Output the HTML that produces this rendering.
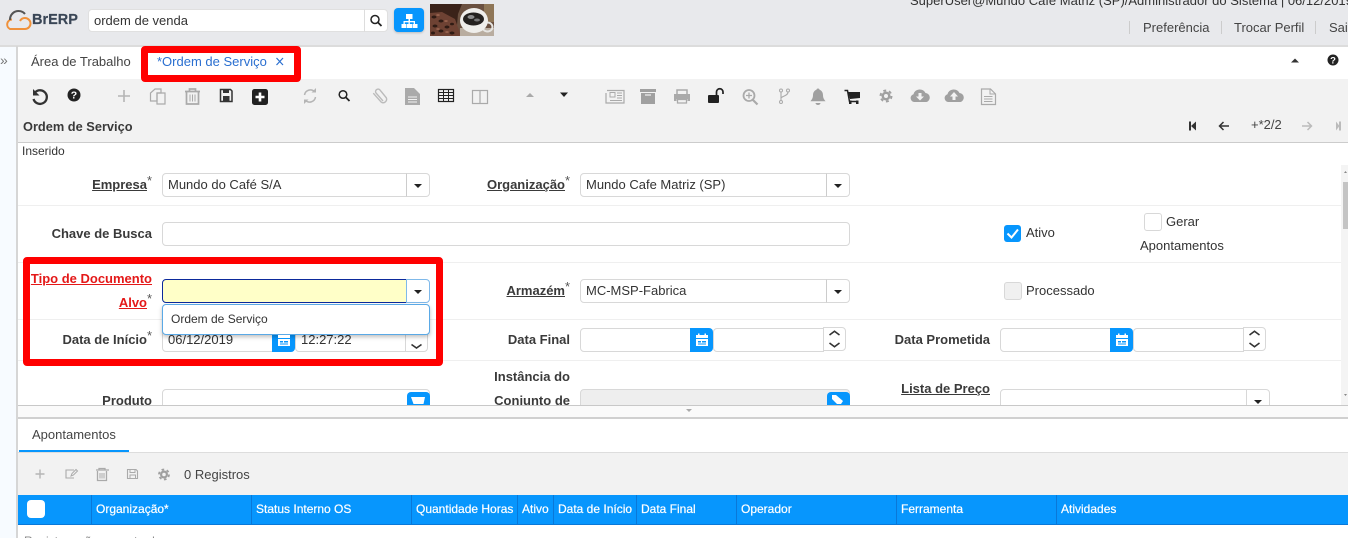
<!DOCTYPE html>
<html lang="pt"><head><meta charset="utf-8"><title>BrERP</title>
<style>
html,body{margin:0;padding:0;width:1348px;height:538px;overflow:hidden;background:#fff}
body{position:relative;font-family:"Liberation Sans",sans-serif;font-size:13px;color:#333}
.a,.t,.l,.i,.b,.h{position:absolute;box-sizing:border-box}
.t,.l,.h{white-space:nowrap;line-height:16px}
.l{font-weight:bold;text-align:right;color:#3a3a3a;font-size:13px}
.l u{text-underline-offset:1px}
.l sup{font-weight:normal;font-size:13px;position:absolute;top:-4px;color:#555;line-height:16px}
.i{background:#fff;border:1px solid #d8d8d8;border-radius:4px;font-size:13px;line-height:22px;padding-left:5px;color:#333;height:24px}
.b{background:#fff;border:1px solid #d8d8d8;border-left-color:#ccc;border-radius:0 4px 4px 0;height:24px;width:24px}
.b:after{content:"";position:absolute;left:7px;top:10px;border:4px solid transparent;border-top:4px solid #222;border-bottom:0}
.c{position:absolute;box-sizing:border-box;background:#0796fd;width:23px;height:24px;border-radius:0 4px 4px 0}
.s{position:absolute;box-sizing:border-box;background:#fff;border:1px solid #d8d8d8;border-radius:0 4px 4px 0;width:23px;height:24px}
.r{position:absolute;left:18px;width:1323px;height:1px;background:#efefef}
.h{color:#fff;font-size:12px;top:501px;font-weight:normal;-webkit-text-stroke:.2px #fff}
.v{position:absolute;top:495px;width:1px;height:29px;background:#0a78d8}
.red{position:absolute;box-sizing:border-box;border:7px solid #f00;border-radius:4px}
</style></head><body>

<!-- header -->
<div class="a" style="left:0;top:0;width:1348px;height:46px;background:#e8e9ec"></div>
<div class="a" style="left:0;top:45px;width:1348px;height:2px;background:#dcdcdc"></div>
<div class="a" style="left:0;top:47px;width:17px;height:491px;background:#f7fbff"></div>
<div class="a" style="left:16px;top:46px;width:2px;height:492px;background:#d6d6d6"></div>
<div class="t" style="left:0;top:52px;font-size:14px;color:#777">»</div>

<div class="t" style="left:32px;top:12px;font-size:14.5px;font-weight:bold;color:#3a4656;-webkit-text-stroke:.2px #3a4656">BrERP</div>
<div class="a" style="left:88px;top:9px;width:300px;height:23px;background:#fff;border:1px solid #e0e0e0;border-radius:4px"></div>
<div class="t" style="left:94px;top:13px;font-size:13px;color:#333">ordem de venda</div>
<div class="a" style="left:364px;top:9px;width:1px;height:23px;background:#ddd"></div>
<div class="a" style="left:394px;top:8px;width:30px;height:24px;background:#0796fd;border-radius:4px;box-shadow:0 1px 2px rgba(0,0,0,.2)"></div>

<div class="t" style="left:910px;top:-7px;font-size:13px;color:#333">SuperUser@Mundo Cafe Matriz (SP)/Administrador do Sistema | 06/12/2019</div>
<div class="a" style="left:1129px;top:21px;width:1px;height:13px;background:#ccc"></div>
<div class="t" style="left:1143px;top:20px;font-size:13px;color:#444">Preferência</div>
<div class="a" style="left:1221px;top:21px;width:1px;height:13px;background:#ccc"></div>
<div class="t" style="left:1234px;top:20px;font-size:13px;color:#444">Trocar Perfil</div>
<div class="a" style="left:1315px;top:21px;width:1px;height:13px;background:#ccc"></div>
<div class="t" style="left:1329px;top:20px;font-size:13px;color:#444">Sair</div>

<!-- tab bar -->
<div class="t" style="left:31px;top:54px;font-size:13px;color:#444">Área de Trabalho</div>
<div class="t" style="left:157px;top:54px;font-size:13px;color:#2a6fd0">*Ordem de Serviço</div>

<!-- toolbar -->
<div class="a" style="left:18px;top:79px;width:1330px;height:64px;background:#f2f2f2;border-bottom:1px solid #ccc"></div>
<div class="t" style="left:23px;top:119px;font-size:12.800px;font-weight:bold;color:#3a3a3a">Ordem de Serviço</div>
<div class="t" style="left:1251px;top:117px;font-size:13px;color:#444">+*2/2</div>

<!-- form -->
<div class="t" style="left:22px;top:143px;font-size:12px;color:#333">Inserido</div>
<div class="r" style="top:205px"></div>
<div class="r" style="top:262px"></div>
<div class="r" style="top:319px"></div>
<div class="r" style="top:360px"></div>

<div class="l" style="right:1201px;top:177px"><u>Empresa</u><sup>*</sup></div>
<div class="i" style="left:162px;top:173px;width:245px;border-radius:4px 0 0 4px">Mundo do Café S/A</div><div class="b" style="left:406px;top:173px"></div>
<div class="l" style="right:783px;top:177px"><u>Organização</u><sup>*</sup></div>
<div class="i" style="left:580px;top:173px;width:247px;border-radius:4px 0 0 4px">Mundo Cafe Matriz (SP)</div><div class="b" style="left:826px;top:173px"></div>

<div class="l" style="right:1196px;top:226px">Chave de Busca</div>
<div class="i" style="left:162px;top:222px;width:688px"></div>

<div class="a" style="left:1004px;top:225px;width:17px;height:17px;background:#0796fd;border-radius:3px"></div>
<div class="t" style="left:1026px;top:225px;font-size:13px">Ativo</div>
<div class="a" style="left:1144px;top:213px;width:18px;height:18px;background:#fff;border:1px solid #d8d8d8;border-radius:3px"></div>
<div class="t" style="left:1166px;top:214px;font-size:13px">Gerar</div>
<div class="t" style="left:1140px;top:238px;font-size:13px">Apontamentos</div>

<div class="l" style="right:1196px;top:271px;color:#e41818"><u>Tipo de Documento</u></div>
<div class="l" style="right:1201px;top:295px;color:#e41818"><u>Alvo</u><sup style="color:#555">*</sup></div>
<div class="a" style="left:162px;top:279px;width:245px;height:24px;background:#ffffc8;border:1px solid #0c2a9c;border-radius:4px 0 0 4px"></div>
<div class="b" style="left:406px;top:279px;border-color:#7fb9ea"></div>

<div class="l" style="right:783px;top:283px"><u>Armazém</u><sup>*</sup></div>
<div class="i" style="left:580px;top:279px;width:247px;border-radius:4px 0 0 4px">MC-MSP-Fabrica</div><div class="b" style="left:826px;top:279px"></div>
<div class="a" style="left:1004px;top:282px;width:18px;height:18px;background:#f0f0f0;border:1px solid #d8d8d8;border-radius:3px"></div>
<div class="t" style="left:1026px;top:283px;font-size:13px">Processado</div>

<div class="l" style="right:1201px;top:332px">Data de Início<sup>*</sup></div>
<div class="i" style="left:162px;top:328px;width:111px;border-radius:4px 0 0 4px">06/12/2019</div><div class="c" style="left:272px;top:328px"></div>
<div class="i" style="left:295px;top:328px;width:111px;border-radius:4px 0 0 4px">12:27:22</div><div class="s" style="left:405px;top:328px"></div>

<div class="l" style="right:778px;top:332px">Data Final</div>
<div class="i" style="left:580px;top:328px;width:111px;border-radius:4px 0 0 4px"></div><div class="c" style="left:690px;top:328px"></div>
<div class="i" style="left:713px;top:328px;width:111px;border-radius:4px 0 0 4px"></div><div class="s" style="left:823px;top:327px"></div>

<div class="l" style="right:358px;top:332px">Data Prometida</div>
<div class="i" style="left:1000px;top:328px;width:111px;border-radius:4px 0 0 4px"></div><div class="c" style="left:1110px;top:328px"></div>
<div class="i" style="left:1133px;top:328px;width:111px;border-radius:4px 0 0 4px"></div><div class="s" style="left:1243px;top:327px"></div>

<div class="l" style="right:1196px;top:393px">Produto</div>
<div class="i" style="left:162px;top:389px;width:268px"></div><div class="c" style="left:407px;top:392px;border-radius:4px 4px 0 0"></div>
<div class="l" style="right:778px;top:369px">Instância do</div>
<div class="l" style="right:778px;top:393px">Conjunto de</div>
<div class="i" style="left:580px;top:389px;width:270px;background:#eee"></div><div class="c" style="left:827px;top:392px;border-radius:4px 4px 0 0"></div>
<div class="l" style="right:358px;top:381px"><u>Lista de Preço</u></div>
<div class="i" style="left:1000px;top:389px;width:270px"></div>
<div class="a" style="left:1246px;top:389px;width:1px;height:20px;background:#d8d8d8"></div>
<div class="a" style="left:1254px;top:400px;border:4px solid transparent;border-top:4px solid #222;border-bottom:0"></div>

<!-- scrollbar -->
<div class="a" style="left:1341px;top:165px;width:7px;height:240px;background:#f4f4f4"></div>
<div class="a" style="left:1343px;top:182px;width:5px;height:47px;background:#c4c4c4"></div>

<!-- splitter -->
<div class="a" style="left:18px;top:405px;width:1330px;height:14px;background:#fafafa;border-top:1px solid #c8c8c8;border-bottom:2px solid #d0d0d0"></div>
<div class="a" style="left:686px;top:409px;border:3px solid transparent;border-top:3px solid #aaa;border-bottom:0"></div>

<!-- popup -->
<div class="a" style="left:162px;top:304px;width:268px;height:31px;background:#fff;border:1px solid #5aa9e6;border-radius:4px;box-shadow:0 2px 4px rgba(0,0,0,.25)"></div>
<div class="t" style="left:171px;top:311px;font-size:12px;color:#333">Ordem de Serviço</div>

<!-- detail -->
<div class="t" style="left:32px;top:427px;font-size:13px;color:#444">Apontamentos</div>
<div class="a" style="left:18px;top:452px;width:1330px;height:1px;background:#ddd"></div>
<div class="a" style="left:19px;top:450px;width:110px;height:2px;background:#0796fd"></div>
<div class="a" style="left:18px;top:453px;width:1330px;height:42px;background:#f2f2f2"></div>
<div class="t" style="left:184px;top:467px;font-size:13px;color:#444">0 Registros</div>
<div class="a" style="left:18px;top:495px;width:1330px;height:30px;background:#0796fd;border-bottom:1px solid #0a78d8"></div>
<div class="a" style="left:27px;top:500px;width:18px;height:18px;background:#fff;border-radius:4px"></div>
<div class="v" style="left:91px"></div><div class="v" style="left:251px"></div><div class="v" style="left:411px"></div><div class="v" style="left:517px"></div><div class="v" style="left:553px"></div><div class="v" style="left:636px"></div><div class="v" style="left:736px"></div><div class="v" style="left:896px"></div><div class="v" style="left:1056px"></div>
<div class="h" style="left:96px">Organização*</div>
<div class="h" style="left:256px">Status Interno OS</div>
<div class="h" style="left:416px">Quantidade Horas</div>
<div class="h" style="left:522px">Ativo</div>
<div class="h" style="left:558px">Data de Início</div>
<div class="h" style="left:641px">Data Final</div>
<div class="h" style="left:741px">Operador</div>
<div class="h" style="left:901px">Ferramenta</div>
<div class="h" style="left:1061px">Atividades</div>
<div class="t" style="left:24px;top:533px;font-size:12px;color:#888">Registros não encontrados</div>

<!-- icons overlay -->
<svg class="a" style="left:0;top:0" width="1348" height="538" viewBox="0 0 1348 538" fill="none">
<!-- logo -->
<path d="M12 19.500A5 5 0 0 0 10 29H25A5.500 5.500 0 0 0 25 18 5.500 5.500 0 0 0 20 21" stroke="#f0913a" stroke-width="2"/>
<path d="M10 20A8.500 8.500 0 0 1 25 14" stroke="#555" stroke-width="2"/>
<!-- search -->
<circle cx="375" cy="19.500" r="4" stroke="#222" stroke-width="1.500"/><path d="M378 22.500l3.500 3.500" stroke="#222" stroke-width="1.800"/>
<!-- sitemap -->
<g fill="#fff"><rect x="406" y="14" width="6.500" height="5"/><rect x="408.500" y="19" width="1.500" height="2.500"/><rect x="403.500" y="21" width="11.500" height="1.300"/><rect x="403.500" y="21" width="1.300" height="3"/><rect x="408.500" y="21" width="1.300" height="3"/><rect x="413.700" y="21" width="1.300" height="3"/><rect x="401.500" y="24" width="5" height="4"/><rect x="407" y="24" width="5" height="4"/><rect x="412.500" y="24" width="5" height="4"/></g>
<!-- coffee -->
<rect x="430" y="4" width="64" height="32" fill="#6a5040"/>
<path d="M430 4h32l-4 10-2 22h-26z" fill="#3a2219"/>
<path d="M430 13l12-1 13 7 6 17h-31z" fill="#6e4233"/>
<g fill="#2f1b14"><ellipse cx="434" cy="17" rx="2.500" ry="1.500"/><ellipse cx="441" cy="21" rx="2.500" ry="1.500"/><ellipse cx="435" cy="26" rx="2.500" ry="1.500"/><ellipse cx="447" cy="27" rx="2.500" ry="1.500"/><ellipse cx="441" cy="31" rx="2.500" ry="1.500"/><ellipse cx="452" cy="33" rx="2.500" ry="1.500"/><ellipse cx="433" cy="33" rx="2" ry="1.500"/><ellipse cx="452" cy="24" rx="2" ry="1.300"/></g>
<g fill="#94604c"><ellipse cx="438" cy="15" rx="1.800" ry="1"/><ellipse cx="446" cy="21" rx="1.800" ry="1"/><ellipse cx="438" cy="29" rx="1.800" ry="1"/><ellipse cx="447" cy="32" rx="1.800" ry="1"/></g>
<rect x="484" y="4" width="10" height="18" fill="#8f7657"/>
<path d="M460 36h34v-8h-34z" fill="#b9ada0"/>
<ellipse cx="487.500" cy="27" rx="5" ry="4.500" stroke="#e6e5e2" stroke-width="2"/>
<ellipse cx="474" cy="20.500" rx="14" ry="12.500" fill="#efeeeb"/><ellipse cx="473.500" cy="19" rx="10.500" ry="6.500" fill="#252220"/>
<ellipse cx="471" cy="17" rx="3.500" ry="2" fill="#8c8c8c"/><ellipse cx="477" cy="20" rx="3" ry="1.500" fill="#777"/>
<!-- tab close -->
<path d="M276.500 58l6.500 7M283 58l-6.500 7" stroke="#2a6fd0" stroke-width="1.200"/>
<!-- tabbar -->
<path d="M1291 62.500l4-4 4 4z" fill="#333"/>
<circle cx="1333" cy="60" r="5.500" fill="#222"/>
<!-- undo -->
<path d="M35 92.500a6.800 6.800 0 1 1-1.500 6.500" stroke="#333" stroke-width="2.300"/><path d="M33 89v6.500h6.500z" fill="#333"/>
<circle cx="74" cy="95" r="6.500" fill="#222"/>
<path d="M124 90v12M118 96h12" stroke="#b5b5b5" stroke-width="1.600"/>
<!-- copy -->
<path d="M155 89h6v4h-4v8h-6.500v-8z" stroke="#aaa" stroke-width="1.200"/><path d="M158 93h7v11h-8v-11z" stroke="#aaa" stroke-width="1.200"/>
<!-- trash -->
<path d="M185 91.500h15M189.500 91v-2h6v2M186.500 92v12h12V92" stroke="#aaa" stroke-width="1.700"/><path d="M190 94.500v7M192.500 94.500v7M195 94.500v7" stroke="#aaa"/>
<!-- save -->
<path d="M220.500 89.500h10l1.500 1.500v10.500h-11.500z" stroke="#333" stroke-width="1.500"/><rect x="223" y="89.500" width="6" height="3.500" fill="#333"/><rect x="223" y="96" width="6.500" height="5" fill="#333"/>
<!-- plus square -->
<rect x="252" y="89" width="16" height="16" rx="2.500" fill="#222"/><path d="M260 92.500v9M255.500 97h9" stroke="#fff" stroke-width="2.600"/>
<!-- refresh -->
<path d="M304.500 95a6 6 0 0 1 10-3.500M315.500 97a6 6 0 0 1-10 3.500" stroke="#b5b5b5" stroke-width="1.500"/><path d="M316 88v4.500h-4.500zM304 104v-4.500h4.500z" fill="#b5b5b5"/>
<!-- search -->
<circle cx="343" cy="94.500" r="3.800" stroke="#222" stroke-width="1.500"/><path d="M346 97.500l3.500 3.500" stroke="#222" stroke-width="1.800"/>
<!-- paperclip -->
<path d="M383 103l-7-8a2.500 2.500 0 0 1 3.800-3.200l6.500 8a3.500 3.500 0 0 1-5 4.400l-8-9" stroke="#bbb" stroke-width="1.400" transform="translate(0 -2)"/>
<!-- file -->
<path d="M405 88h9l6 6v11h-15z" fill="#aaa"/><path d="M408 97h9M408 99.500h9M408 102h9" stroke="#f2f2f2"/>
<!-- table -->
<rect x="438.500" y="89.500" width="15" height="12" stroke="#222" stroke-width="1.200"/><path d="M438.500 92.500h15M438.500 95.500h15M438.500 98.500h15M443.500 90v11M448.500 90v11" stroke="#222"/>
<!-- columns -->
<rect x="472.500" y="90.500" width="15" height="13" stroke="#aaa" stroke-width="1.200"/><path d="M480 90v14" stroke="#aaa" stroke-width="1.200"/>
<path d="M526 97l4-4 4 4z" fill="#aaa"/><path d="M560 92.500h8l-4 4.500z" fill="#222"/>
<!-- newspaper -->
<path d="M607 90.500h17v12.500h-18v-10" stroke="#aaa" stroke-width="1.200"/><rect x="610" y="92.500" width="5" height="4.500" stroke="#aaa"/><path d="M617 93h5M617 95.500h5M617 98h5M610 100.500h12" stroke="#aaa"/>
<!-- archive -->
<path d="M640 89h16v3h-16zM641 93h14v11h-14z" fill="#a0a0a0"/><path d="M645 95h6" stroke="#f2f2f2" stroke-width="1.200"/>
<!-- print -->
<path d="M677 94v-4h10v4" stroke="#aaa" stroke-width="1.500"/><path d="M674 94h16v7h-2.500v-2h-11v2H674z" fill="#aaa"/><path d="M677.500 99.500h9v3.500h-9z" stroke="#aaa" stroke-width="1.300"/>
<!-- unlock -->
<rect x="708" y="95" width="11" height="8" rx="1" fill="#222"/><path d="M716.500 95v-3a3.200 3.200 0 0 1 6.500 0v2" stroke="#222" stroke-width="1.700"/>
<!-- zoom -->
<circle cx="749" cy="95.500" r="5.500" stroke="#aaa" stroke-width="1.800"/><path d="M753 100l4.500 4.500" stroke="#aaa" stroke-width="2.200"/><path d="M749 92.500v6M746 95.500h6" stroke="#aaa" stroke-width="1.300"/>
<!-- fork -->
<circle cx="781" cy="90.500" r="1.500" stroke="#aaa"/><circle cx="788" cy="90.500" r="1.500" stroke="#aaa"/><circle cx="781" cy="102" r="1.500" stroke="#aaa"/><path d="M781 92v8.500M788 92c0 4-6 4-7 6" stroke="#aaa" stroke-width="1.100"/>
<!-- bell -->
<path d="M818 88.500c1 0 1.500.5 1.500 1.300 2.500 1 3.500 3 3.500 5.500 0 3 1.500 4.500 2.500 6h-15c1-1.500 2.500-3 2.500-6 0-2.500 1-4.500 3.500-5.500 0-.8.500-1.300 1.500-1.300z" fill="#a0a0a0"/><path d="M815.500 103h5a2.500 2 0 0 1-5 0z" fill="#a0a0a0"/>
<!-- cart -->
<path d="M844.500 90.500h3l2 11h9" stroke="#222" stroke-width="1.500"/><path d="M848 92h12v6l-10 1z" fill="#222"/><rect x="849" y="100.500" width="2.500" height="3.500" fill="#222"/><rect x="856" y="100.500" width="2.500" height="3.500" fill="#222"/>
<!-- gear -->
<circle cx="886" cy="96" r="4.500" fill="#a0a0a0"/><circle cx="886" cy="96" r="5.500" stroke="#a0a0a0" stroke-width="2" stroke-dasharray="2.900 2.860"/><circle cx="886" cy="96" r="2" fill="#f2f2f2"/>
<!-- clouds -->
<path d="M914 102a4 4 0 0 1-.5-7.800 6.500 6.500 0 0 1 12-1.200 4.600 4.600 0 0 1 1 9z" fill="#a0a0a0"/><path d="M916 96.500h8l-4 4z" fill="#f2f2f2"/><rect x="918.500" y="93" width="3" height="4" fill="#f2f2f2"/>
<path d="M948 102a4 4 0 0 1-.5-7.800 6.500 6.500 0 0 1 12-1.200 4.600 4.600 0 0 1 1 9z" fill="#a0a0a0"/><path d="M950 96.500h8l-4-4.500z" fill="#f2f2f2"/><rect x="952.500" y="96" width="3" height="4" fill="#f2f2f2"/>
<!-- doc -->
<path d="M981.500 89h9l5 5v10.500h-14z" stroke="#aaa" stroke-width="1.200"/><path d="M990 89v5h5M984 96.500h8.500M984 99h8.500M984 101.500h8.500" stroke="#aaa"/>
<!-- nav -->
<path d="M1189 121.500h2v9h-2zM1196 121.500v9l-5-4.500z" fill="#333"/>
<path d="M1229 126h-9M1223.500 122l-4 4 4 4" stroke="#333" stroke-width="1.500"/>
<path d="M1302 126h9M1307.500 122l4 4-4 4" stroke="#bbb" stroke-width="1.500"/>
<path d="M1341 121.500h-2v9h2zM1336 121.500v9l3.500-4.500z" fill="#bbb"/>
<!-- calendars -->
<g><path d="M278 335h12v11h-12z" fill="#fff"/><path d="M278 338.500h12" stroke="#0796fd"/><path d="M280 341h3v1.500h-3zM284 341h4v1.500h-4zM280 343.500h8v1h-8z" fill="#0796fd"/></g>
<g transform="translate(418 0)"><path d="M278 335h12v11h-12z" fill="#fff"/><rect x="280" y="333.500" width="1.500" height="2" fill="#fff"/><rect x="286.500" y="333.500" width="1.500" height="2" fill="#fff"/><path d="M278 338.500h12" stroke="#0796fd"/><path d="M280 341h3v1.500h-3zM284 341h4v1.500h-4zM280 343.500h8v1h-8z" fill="#0796fd"/></g>
<g transform="translate(838 0)"><path d="M278 335h12v11h-12z" fill="#fff"/><rect x="280" y="333.500" width="1.500" height="2" fill="#fff"/><rect x="286.500" y="333.500" width="1.500" height="2" fill="#fff"/><path d="M278 338.500h12" stroke="#0796fd"/><path d="M280 341h3v1.500h-3zM284 341h4v1.500h-4zM280 343.500h8v1h-8z" fill="#0796fd"/></g>
<!-- spinners -->
<path d="M411.500 344.500l5 3.500 5-3.500" stroke="#333" stroke-width="1.600"/>
<path d="M829.500 335l5-3.800 5 3.800M829.500 343l5 3.800 5-3.800" stroke="#333" stroke-width="1.600"/>
<path d="M1249.500 335l5-3.800 5 3.800M1249.500 343l5 3.800 5-3.800" stroke="#333" stroke-width="1.600"/>
<!-- check -->
<path d="M1007.500 233.500l4 4 6.500-8" stroke="#fff" stroke-width="2"/>
<!-- cart/tag clipped -->
<path d="M411 397h14l-1.500 7h-10z" fill="#fff"/>
<path d="M832 395h4l7 6-2 3h-4l-5-5z" fill="#fff"/>
<!-- lower toolbar -->
<path d="M40 469.500v9M35.500 474h9" stroke="#b5b5b5" stroke-width="1.400"/>
<path d="M74 470h-8v8h8" stroke="#aaa" stroke-width="1.100"/><path d="M71 476l1-2.500 4-4 1.500 1.500-4 4z" stroke="#aaa"/>
<path d="M96 470h13M99 470v-1.500h6v1.500M97.500 471v9.500h9V471" stroke="#aaa" stroke-width="1.300"/><path d="M100 473v5.500M102 473v5.500M104 473v5.500" stroke="#aaa"/>
<path d="M127.500 469.500h8.500l1.500 1.500v7.500h-10z" stroke="#aaa" stroke-width="1.100"/><path d="M130 470v2.500h5V470M130 478v-3h5.500v3" stroke="#aaa"/>
<circle cx="164" cy="474.500" r="4" fill="#a0a0a0"/><circle cx="164" cy="474.500" r="5" stroke="#a0a0a0" stroke-width="1.800" stroke-dasharray="2.620 2.620"/><circle cx="164" cy="474.500" r="1.800" fill="#f2f2f2"/>
<!-- scrollbar arrows -->
<path d="M1344 173l1.500-2 1.500 2zM1344 394l1.500 2 1.500-2z" fill="#888"/>
<!-- help glyph marks -->
<text x="1333" y="63.500" text-anchor="middle" font-family="Liberation Sans" font-size="9.500" font-weight="bold" fill="#fff">?</text>
<text x="74" y="98.500" text-anchor="middle" font-family="Liberation Sans" font-size="10.500" font-weight="bold" fill="#fff">?</text>
</svg>

<!-- red highlights -->
<div class="red" style="left:141px;top:46px;width:160px;height:36px"></div>
<div class="red" style="left:23px;top:257px;width:420px;height:109px"></div>
</body></html>
